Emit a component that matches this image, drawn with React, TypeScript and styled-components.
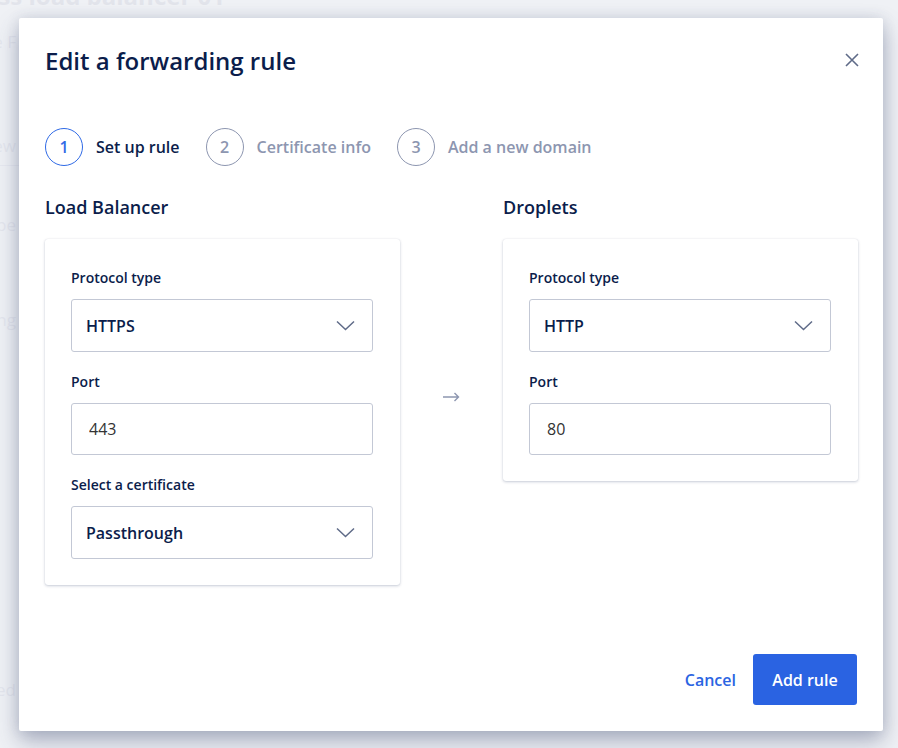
import React from "react";
import styled, { createGlobalStyle } from "styled-components";

const GlobalStyle = createGlobalStyle`
  html, body {
    margin: 0;
    padding: 0;
    background: #f1f2f6;
    font-family: "Open Sans", "Lato", sans-serif;
    overflow: hidden;
  }
`;

const Page = styled.div`
  width: 898px;
  height: 748px;
  overflow: hidden;
  position: relative;
  background: #f3f4f7;
`;

const PageContent = styled.div`
  display: flex;
  flex-direction: column;
  margin-top: -19px;
`;

const PageTitle = styled.h1`
  margin: 0;
  width: 225px;
  display: flex;
  justify-content: flex-end;
  white-space: nowrap;
  font-size: 24px;
  font-weight: 700;
  line-height: 30px;
  color: #d8dbe3;
`;

const PageLine = styled.div<{ $top: number }>`
  margin-top: ${(p) => p.$top}px;
  width: 16px;
  display: flex;
  justify-content: flex-end;
  white-space: nowrap;
  font-size: 17px;
  line-height: 20px;
  color: #dcdfe7;
`;

const PageRule = styled.div`
  margin-top: 9px;
  height: 1px;
  width: 20px;
  background: #e3e5ec;
`;

const Overlay = styled.div`
  position: absolute;
  inset: 0;
  background: rgba(236, 238, 243, 0.5);
`;

const Modal = styled.div`
  position: absolute;
  left: 19px;
  top: 18px;
  width: 864px;
  height: 713px;
  box-sizing: border-box;
  background: #ffffff;
  border-radius: 2px;
  box-shadow: 0 10px 22px rgba(60, 70, 110, 0.38), 0 0 14px rgba(60, 70, 110, 0.12);
  padding: 27px 26px 26px;
  display: flex;
  flex-direction: column;
`;

const Header = styled.div`
  display: flex;
  align-items: center;
  justify-content: space-between;
`;

const Title = styled.h2`
  margin: 0;
  font-size: 24px;
  line-height: 32px;
  font-weight: 600;
  color: #0b1d4b;
`;

const CloseButton = styled.button`
  border: none;
  background: none;
  padding: 0;
  margin-right: -2px;
  margin-top: -3px;
  width: 14px;
  height: 14px;
  display: flex;
  cursor: pointer;
`;

const Stepper = styled.div`
  display: flex;
  align-items: center;
  margin-top: 51px;
`;

const Step = styled.div`
  display: flex;
  align-items: center;
  gap: 13px;
  margin-right: 26px;
`;

const StepCircle = styled.div<{ $active?: boolean }>`
  width: 38px;
  height: 38px;
  box-sizing: border-box;
  border-radius: 50%;
  border: 1.6px solid ${(p) => (p.$active ? "#2f6ae6" : "#8d96b0")};
  color: ${(p) => (p.$active ? "#2f6ae6" : "#8d96b0")};
  display: flex;
  align-items: center;
  justify-content: center;
  font-size: 16px;
  font-weight: 600;
`;

const StepLabel = styled.span<{ $active?: boolean }>`
  font-size: 16px;
  font-weight: 600;
  color: ${(p) => (p.$active ? "#0b1d4b" : "#8d96b0")};
`;

const Columns = styled.div`
  display: grid;
  grid-template-columns: 355px 103px 355px;
  align-items: start;
  margin-top: 29px;
`;

const Column = styled.div`
  display: flex;
  flex-direction: column;
`;

const ColumnTitle = styled.h3`
  margin: 0;
  font-size: 18px;
  line-height: 24px;
  font-weight: 600;
  color: #0b1d4b;
`;

const ArrowCell = styled.div`
  padding-top: 197px;
  display: flex;
  justify-content: center;
`;

const Card = styled.div`
  margin-top: 20px;
  background: #fff;
  border-radius: 3px;
  box-shadow: 0 1px 3px rgba(3, 27, 78, 0.22), 0 0 1px rgba(3, 27, 78, 0.12);
  padding: 29px 27px 26px 26px;
  display: flex;
  flex-direction: column;
`;

const FieldLabel = styled.label<{ $first?: boolean }>`
  display: block;
  margin-top: ${(p) => (p.$first ? 0 : 20)}px;
  font-size: 14px;
  line-height: 20px;
  font-weight: 600;
  color: #0b1d4b;
`;

const SelectBox = styled.div`
  margin-top: 11px;
  height: 53px;
  box-sizing: border-box;
  border: 1px solid #c3c8d5;
  border-radius: 3px;
  padding: 0 17px 0 14px;
  display: flex;
  align-items: center;
  justify-content: space-between;
  font-size: 16px;
  font-weight: 600;
  color: #0b1d4b;
`;

const TextInput = styled.input`
  margin-top: 11px;
  height: 52px;
  box-sizing: border-box;
  border: 1px solid #c3c8d5;
  border-radius: 3px;
  padding: 0 17px;
  font-family: inherit;
  font-size: 16px;
  color: #333;
  outline: none;
`;

const Footer = styled.div`
  margin-top: auto;
  display: flex;
  justify-content: flex-end;
  align-items: center;
  gap: 17px;
`;

const LinkButton = styled.button`
  border: none;
  background: none;
  padding: 0;
  font-family: inherit;
  font-size: 16px;
  font-weight: 600;
  color: #2b64e2;
  cursor: pointer;
`;

const PrimaryButton = styled.button`
  width: 104px;
  height: 51px;
  border: none;
  border-radius: 3px;
  background: #2a63e2;
  color: #fff;
  font-family: inherit;
  font-size: 16px;
  font-weight: 600;
  cursor: pointer;
`;

const Chevron = () => (
  <svg width="19" height="11" viewBox="0 0 19 11" fill="none">
    <path d="M1 1.5l8.5 8 8.5-8" stroke="#5f6b88" strokeWidth="1.5" />
  </svg>
);

const CloseIcon = () => (
  <svg width="14" height="14" viewBox="0 0 14 14" fill="none">
    <path d="M1 1l12 12M13 1L1 13" stroke="#5f6b88" strokeWidth="1.6" />
  </svg>
);

const Arrow = () => (
  <svg width="17" height="10" viewBox="0 0 17 10" fill="none">
    <path d="M0 5h15.5M11.5 1l4 4-4 4" stroke="#8d96b0" strokeWidth="1.4" />
  </svg>
);

const steps = ["Set up rule", "Certificate info", "Add a new domain"];

export default function App() {
  return (
    <Page>
      <GlobalStyle />
      <PageContent>
        <PageTitle>Access load balancer 01</PageTitle>
        <PageLine $top={21}>Type F</PageLine>
        <PageLine $top={84}>Overview</PageLine>
        <PageRule />
        <PageLine $top={49}>Type</PageLine>
        <PageLine $top={75}>Setting</PageLine>
        <PageLine $top={350}>Cached</PageLine>
      </PageContent>
      <Overlay />
      <Modal>
        <Header>
          <Title>Edit a forwarding rule</Title>
          <CloseButton aria-label="Close">
            <CloseIcon />
          </CloseButton>
        </Header>
        <Stepper>
          {steps.map((s, i) => (
            <Step key={s}>
              <StepCircle $active={i === 0}>{i + 1}</StepCircle>
              <StepLabel $active={i === 0}>{s}</StepLabel>
            </Step>
          ))}
        </Stepper>
        <Columns>
          <Column>
            <ColumnTitle>Load Balancer</ColumnTitle>
            <Card>
              <FieldLabel $first>Protocol type</FieldLabel>
              <SelectBox>
                HTTPS
                <Chevron />
              </SelectBox>
              <FieldLabel>Port</FieldLabel>
              <TextInput defaultValue="443" />
              <FieldLabel>Select a certificate</FieldLabel>
              <SelectBox>
                Passthrough
                <Chevron />
              </SelectBox>
            </Card>
          </Column>
          <ArrowCell>
            <Arrow />
          </ArrowCell>
          <Column>
            <ColumnTitle>Droplets</ColumnTitle>
            <Card>
              <FieldLabel $first>Protocol type</FieldLabel>
              <SelectBox>
                HTTP
                <Chevron />
              </SelectBox>
              <FieldLabel>Port</FieldLabel>
              <TextInput defaultValue="80" />
            </Card>
          </Column>
        </Columns>
        <Footer>
          <LinkButton>Cancel</LinkButton>
          <PrimaryButton>Add rule</PrimaryButton>
        </Footer>
      </Modal>
    </Page>
  );
}
